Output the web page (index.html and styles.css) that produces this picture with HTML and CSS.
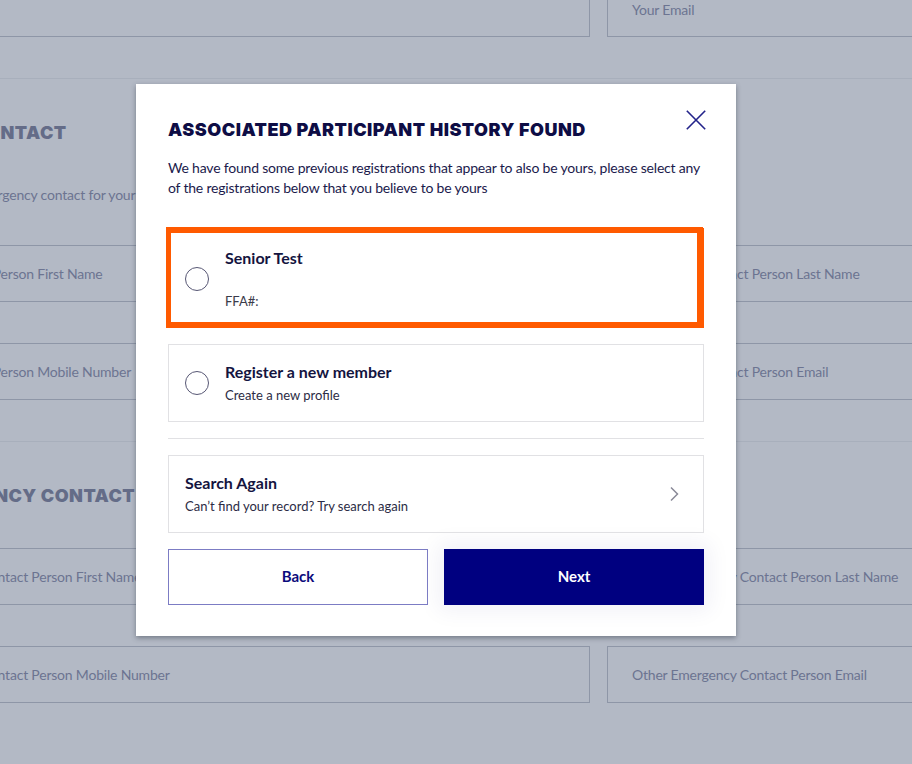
FILE: index.html
```html
<!DOCTYPE html>
<html lang="en">
<head>
<meta charset="utf-8">
<title>Associated participant history found</title>
<link rel="stylesheet" href="styles.css">
</head>
<body>
<div class="page">
  <div class="row row-top">
    <div class="field"><span>Mobile Number</span></div>
    <div class="field"><span>Your Email</span></div>
  </div>
  <div class="divider"></div>
  <section class="section">
    <h2>EMERGENCY CONTACT</h2>
    <p class="hint">Please add an emergency contact for your participant.</p>
    <div class="grid">
      <div class="field"><span>Emergency Contact Person First Name</span></div>
      <div class="field"><span>Emergency Contact Person Last Name</span></div>
      <div class="field"><span>Emergency Contact Person Mobile Number</span></div>
      <div class="field"><span>Emergency Contact Person Email</span></div>
    </div>
  </section>
  <div class="divider"></div>
  <section class="section">
    <h2>OTHER EMERGENCY CONTACT</h2>
    <div class="grid grid-tight">
      <div class="field"><span>Other Emergency Contact Person First Name</span></div>
      <div class="field"><span>Other Emergency Contact Person Last Name</span></div>
      <div class="field"><span>Other Emergency Contact Person Mobile Number</span></div>
      <div class="field"><span>Other Emergency Contact Person Email</span></div>
    </div>
  </section>
</div>

<div class="modal" role="dialog">
  <button class="close" aria-label="Close">
    <svg viewBox="0 0 20 20" width="20" height="20"><path d="M0.8 0.8L19.2 19.2M19.2 0.8L0.8 19.2"/></svg>
  </button>
  <h1 class="modal-title">ASSOCIATED PARTICIPANT HISTORY FOUND</h1>
  <p class="intro">We have found some previous registrations that appear to also be yours, please select any of the registrations below that you believe to be yours</p>

  <div class="option option-selected">
    <span class="radio"></span>
    <div class="opt-text">
      <div class="opt-title">Senior Test</div>
      <div class="opt-meta">FFA#:</div>
    </div>
  </div>

  <div class="option">
    <span class="radio"></span>
    <div class="opt-text">
      <div class="opt-title">Register a new member</div>
      <div class="opt-sub">Create a new profile</div>
    </div>
  </div>

  <div class="sep"></div>

  <div class="option option-link">
    <div class="opt-text">
      <div class="opt-title">Search Again</div>
      <div class="opt-sub">Can’t find your record? Try search again</div>
    </div>
    <svg class="chev" viewBox="0 0 10 16" width="10" height="16"><path d="M2 1.5L8.5 8L2 14.5"/></svg>
  </div>

  <div class="actions">
    <button class="btn btn-back">Back</button>
    <button class="btn btn-next">Next</button>
  </div>
</div>
</body>
</html>
```

FILE: styles.css
```css
* { box-sizing: border-box; }
html, body { margin: 0; padding: 0; }
body {
  background: #b3b9c5;
  font-family: "Lato", "Liberation Sans", sans-serif;
  width: 912px;
  height: 764px;
  overflow: hidden;
  position: relative;
}

/* background form (dimmed) */
.page {
  margin-left: -152px;
  width: 1501px;
  margin-top: -20px;
}
.row, .grid {
  display: grid;
  grid-template-columns: 742px 742px;
  column-gap: 17px;
}
.grid { row-gap: 41px; }
.field {
  height: 57px;
  border: 1px solid #8e96a7;
  display: flex;
  align-items: center;
  padding-left: 24px;
  font-size: 14px;
  letter-spacing: -0.2px;
  color: #6c7491;
}
.row-top .field { align-items: flex-start; padding-top: 20px; }
.divider {
  height: 1px;
  background: #a8afbc;
  margin-top: 41px;
  margin-left: -200px;
  width: 2000px;
}
.section { padding: 40px 0 0 24px; }
.section .grid { margin-left: -24px; }
.section h2 {
  margin: 0 0 0 -25px;
  font-family: "Inter", "Lato", sans-serif;
  font-size: 18px;
  line-height: 28px;
  font-weight: 900;
  letter-spacing: 0.45px;
  color: #646c88;
}
.hint {
  margin: 38px 0 40px 15px;
  font-size: 14px;
  line-height: 20px;
  letter-spacing: -0.2px;
  color: #6c7491;
}
.grid-tight { margin-top: 38px; }

/* modal */
.modal {
  position: absolute;
  left: 136px;
  top: 84px;
  width: 600px;
  height: 552px;
  background: #fff;
  padding: 34px 32px 31px;
  box-shadow: 0 2px 5px rgba(40, 46, 60, 0.45);
  color: #14143f;
}
.close {
  position: absolute;
  top: 26px;
  right: 30px;
  width: 20px;
  height: 20px;
  padding: 0;
  border: 0;
  background: none;
  display: block;
}
.close svg { display: block; }
.close path { stroke: #23238a; stroke-width: 1.6; fill: none; }

.modal-title {
  margin: 0 0 16px;
  font-family: "Inter", "Lato", sans-serif;
  font-size: 18px;
  line-height: 24px;
  font-weight: 900;
  letter-spacing: 0.5px;
  color: #0e0d45;
}
.intro {
  margin: 0 0 30px;
  font-size: 14px;
  line-height: 20px;
  letter-spacing: -0.2px;
  color: #1b1a4c;
}

.option {
  border: 1px solid #e1e1e4;
  display: flex;
  align-items: center;
  gap: 16px;
  padding: 16px 16px;
  margin-bottom: 16px;
  position: relative;
}
.option-selected {
  padding: 18px 16px 16px;
  height: 100px;
  border-color: #ff5a00;
}
.option-selected::after {
  content: "";
  position: absolute;
  left: -3px;
  right: 0px;
  top: -2px;
  bottom: -1px;
  border-style: solid;
  border-color: #ff5a00;
  border-width: 6px 6px 6px 5px;
  pointer-events: none;
}
.radio {
  width: 24px;
  height: 24px;
  border: 1px solid #575774;
  border-radius: 50%;
  flex: none;
}
.opt-text { flex: 1; }
.opt-title {
  font-size: 16px;
  line-height: 22px;
  font-weight: 700;
  color: #14143f;
}
.opt-meta {
  margin-top: 22px;
  font-size: 13px;
  line-height: 20px;
  color: #3b3b4a;
}
.opt-sub {
  margin-top: 2px;
  font-size: 13px;
  line-height: 20px;
  color: #2c2c45;
}
.sep {
  height: 1px;
  background: #e1e1e4;
  margin-bottom: 16px;
}
.option-link { padding-right: 24px; }
.chev { flex: none; }
.chev path { stroke: #8a8a98; stroke-width: 1.5; fill: none; }

.actions {
  display: grid;
  grid-template-columns: 1fr 1fr;
  column-gap: 16px;
}
.btn {
  height: 56px;
  font-family: inherit;
  font-size: 15px;
  font-weight: 700;
  border-radius: 0;
  cursor: pointer;
  padding: 0 0 2px;
}
.btn-back {
  background: #fff;
  border: 1px solid #7c7cc4;
  color: #0b0b7c;
}
.btn-next {
  background: #000080;
  border: 1px solid #000080;
  color: #fff;
  box-shadow: 0 0 22px 6px rgba(20, 20, 120, 0.06);
}
```
